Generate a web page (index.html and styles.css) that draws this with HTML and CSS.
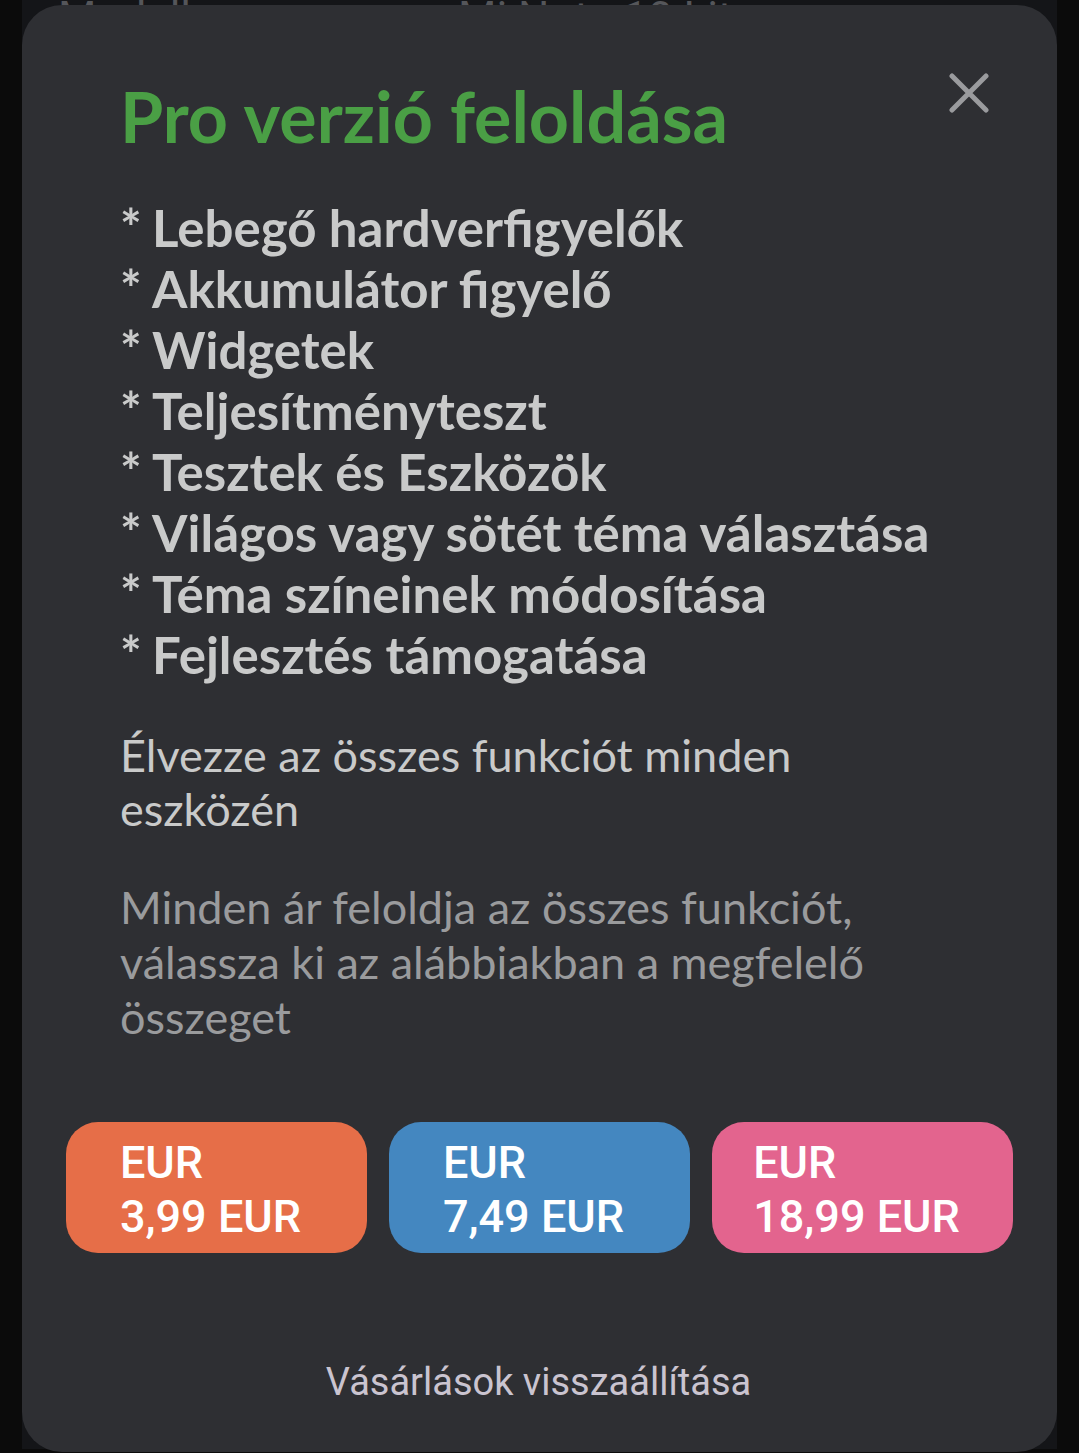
FILE: index.html
```html
<!DOCTYPE html>
<html>
<head>
  <meta name="viewport" content="width=device-width, initial-scale=1.0">
  <title>Pro verzió feloldása</title>
  <link rel="stylesheet" href="styles.css">
</head>
<body>

  <div class="page">
    <div class="info-row">
      <span class="info-label">Modell</span>
      <span class="info-value">Mi Note 10 Lite</span>
    </div>
  </div>

  <div class="dialog">
    <div class="dialog-head">
      <h1>Pro verzió feloldása</h1>
      <button class="close" aria-label="Bezárás">
        <svg width="40" height="40" viewBox="0 0 40 40">
          <path d="M3 3 L37 37 M37 3 L3 37" stroke="#9a9b9e" stroke-width="5" stroke-linecap="round"/>
        </svg>
      </button>
    </div>

    <ul class="features">
      <li><span class="star">* </span>Lebegő hardverfigyelők</li>
      <li><span class="star">* </span>Akkumulátor figyelő</li>
      <li><span class="star">* </span>Widgetek</li>
      <li><span class="star">* </span>Teljesítményteszt</li>
      <li><span class="star">* </span>Tesztek és Eszközök</li>
      <li><span class="star">* </span>Világos vagy sötét téma választása</li>
      <li><span class="star">* </span>Téma színeinek módosítása</li>
      <li><span class="star">* </span>Fejlesztés támogatása</li>
    </ul>

    <p class="enjoy">Élvezze az összes funkciót minden eszközén</p>
    <p class="note">Minden ár feloldja az összes funkciót, válassza ki az alábbiakban a megfelelő összeget</p>

    <div class="prices">
      <button class="price orange"><span>EUR<br>3,99 EUR</span></button>
      <button class="price blue"><span>EUR<br>7,49 EUR</span></button>
      <button class="price pink"><span>EUR<br>18,99 EUR</span></button>
    </div>

    <div class="restore">Vásárlások visszaállítása</div>
  </div>

</body>
</html>
```

FILE: styles.css
```css
body {
  margin: 0;
  height: 1453px;
  overflow: hidden;
  background: #0b0b0b;
  font-family: 'Lato', 'Roboto', sans-serif;
  position: relative;
}

.page {
  margin: 0 22px;
  height: 100%;
  background: #141518;
}

.info-row {
  display: flex;
  font-family: 'Roboto', sans-serif;
  font-size: 44px;
  color: #55565a;
  line-height: 44px;
  margin-top: -4px;
  padding-left: 36px;
}

.info-label {
  width: 400px;
}

/* dialog sits over the page */
.dialog {
  position: absolute;
  top: 5px;
  left: 22px;
  right: 22px;
  bottom: 1px;
  background: #2e2f33;
  border-radius: 40px;
  padding: 69px 100px 0 98px;
  box-sizing: border-box;
}

.dialog-head {
  display: flex;
  justify-content: space-between;
  align-items: flex-start;
}

h1 {
  margin: 0;
  font-size: 70px;
  line-height: 84px;
  font-weight: 700;
  color: #4a9f45;
}

.close {
  width: 56px;
  height: 56px;
  margin: -9px -40px 0 0;
  padding: 0;
  border: none;
  background: none;
  display: flex;
  align-items: center;
  justify-content: center;
}

.features {
  list-style: none;
  margin: 39px 0 0 0;
  padding: 0;
  font-size: 51px;
  line-height: 61px;
  font-weight: 700;
  color: #c9caca;
  white-space: nowrap;
}

.star {
  word-spacing: -2px;
}

.enjoy {
  margin: 43px 0 0 0;
  font-size: 45px;
  line-height: 54px;
  color: #c9caca;
}

.note {
  margin: 44px 0 0 0;
  font-size: 45px;
  line-height: 55px;
  color: #9a9b9d;
}

.prices {
  display: flex;
  gap: 22px;
  margin: 77px -56px 0 -54px;
}

.price {
  flex: 1;
  height: 131px;
  border: none;
  border-radius: 32px;
  font-family: 'Roboto', sans-serif;
  font-weight: 500;
  font-size: 45px;
  line-height: 54px;
  color: #fff;
  text-align: left;
  display: flex;
  justify-content: center;
  align-items: center;
  padding: 5px 12px 0 0;
}

.orange { background: #e66e48; }
.blue { background: #4487c0; }
.pink { background: #e3648e; }

.restore {
  margin-top: 107px;
  text-align: center;
  font-family: 'Roboto', sans-serif;
  font-size: 38px;
  color: #cac4d0;
}
```
